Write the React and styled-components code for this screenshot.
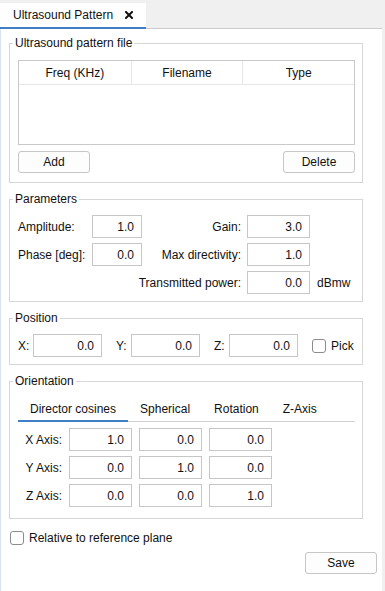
import React from "react";
import styled, { createGlobalStyle } from "styled-components";

const GlobalStyle = createGlobalStyle`
  html, body { margin: 0; padding: 0; background: #f0f0f0; }
  body { font-family: "Liberation Sans", Arial, sans-serif; font-size: 12px; color: #111; }
  * { box-sizing: border-box; }
`;

const Page = styled.div`
  width: 385px;
  height: 591px;
  display: flex;
  background: #f0f0f0;
  overflow: hidden;
`;

const Main = styled.div`
  width: 382px;
  display: flex;
  flex-direction: column;
`;

const TabBar = styled.div`
  height: 29px;
  display: flex;
  align-items: flex-end;
  border-bottom: 1px solid #cbcbcb;
  background: #f0f0f0;
`;

const DocTab = styled.div`
  width: 146px;
  height: 26px;
  margin-bottom: -1px;
  padding-left: 13px;
  background: #fff;
  border-bottom: 2px solid #3f7fc6;
  display: flex;
  align-items: center;
  gap: 12px;
  font-size: 12px;
  color: #111;
`;

const Content = styled.div`
  flex: 1;
  background: #fff;
  border-left: 1px solid #d9e4f1;
  padding: 7px 5px 0 8px;
  display: flex;
  flex-direction: column;
`;

const Group = styled.fieldset`
  width: 354px;
  margin: 0;
  min-width: 0;
  border: 1px solid #d6d6d6;
  padding: ${(p) => p.$pad};
  & + & { margin-top: 9px; }
`;

const Legend = styled.legend`
  margin-left: -5px;
  padding: 0 2px;
  line-height: 14px;
  font-size: 12px;
  color: #111;
`;

const Table = styled.div`
  height: 85px;
  border: 1px solid #c9c9c9;
  display: flex;
  flex-direction: column;
`;

const HeaderRow = styled.div`
  height: 24px;
  display: grid;
  grid-template-columns: 1fr 1fr 1fr;
  border-bottom: 1px solid #e6e6e6;
`;

const HeaderCell = styled.div`
  display: flex;
  align-items: center;
  justify-content: center;
  border-left: ${(p) => (p.$first ? "none" : "1px solid #e6e6e6")};
`;

const ButtonRow = styled.div`
  display: flex;
  justify-content: space-between;
  margin-top: 6px;
`;

const Button = styled.button`
  width: 72px;
  height: 22px;
  padding: 0;
  background: #fdfdfd;
  border: 1px solid #c6c6c6;
  border-radius: 3px;
  font-family: inherit;
  font-size: 12px;
  color: #111;
`;

const ParamGrid = styled.div`
  display: grid;
  grid-template-columns: 68px 50px 93px 63px auto;
  column-gap: 6px;
  row-gap: 5px;
  align-items: center;
`;

const Label = styled.span`
  white-space: nowrap;
  text-align: ${(p) => (p.$right ? "right" : "left")};
  grid-column: ${(p) => p.$span || "auto"};
  margin-left: ${(p) => p.$ml || 0}px;
`;

const Field = styled.input`
  width: 100%;
  height: 23px;
  border: 1px solid #c6c6c6;
  padding: 0 7px 0 4px;
  text-align: right;
  font-family: inherit;
  font-size: 12px;
  color: #111;
  background: #fff;
  outline: none;
  grid-column: ${(p) => p.$col || "auto"};
`;

const PosRow = styled.div`
  display: flex;
  align-items: center;
`;

const PosField = styled.div`
  width: 84px;
  display: flex;
  align-items: center;
  margin-right: 14px;
  & > span { width: 15px; flex: none; }
`;

const CheckLine = styled.label`
  display: flex;
  align-items: center;
  gap: 5px;
  margin-left: ${(p) => p.$ml || 0}px;
  margin-top: ${(p) => p.$mt || 0}px;
`;

const Box = styled.span`
  width: 14px;
  height: 14px;
  border: 1px solid #8c8c8c;
  border-radius: 3px;
  background: #fff;
  flex: none;
`;

const TabStrip = styled.div`
  height: 25px;
  display: flex;
  border-bottom: 1px solid #cfcfcf;
`;

const OTab = styled.div`
  padding: 0 12px;
  margin-bottom: -1px;
  display: flex;
  align-items: center;
  border-bottom: 2px solid ${(p) => (p.$active ? "#3f7fc6" : "transparent")};
`;

const AxisGrid = styled.div`
  margin-top: 6px;
  display: grid;
  grid-template-columns: 44px 63px 63px 63px;
  column-gap: 7px;
  row-gap: 5px;
  align-items: center;
`;

const SaveRow = styled.div`
  display: flex;
  justify-content: flex-end;
  margin-top: 7px;
`;

const CloseIcon = () => (
  <svg width="8" height="8" viewBox="0 0 8 8">
    <path d="M1 1 L7 7 M7 1 L1 7" stroke="#111" strokeWidth="2" strokeLinecap="square" />
  </svg>
);

const axes = [
  ["X Axis:", "1.0", "0.0", "0.0"],
  ["Y Axis:", "0.0", "1.0", "0.0"],
  ["Z Axis:", "0.0", "0.0", "1.0"],
];

export default function App() {
  return (
    <>
      <GlobalStyle />
      <Page>
        <Main>
          <TabBar>
            <DocTab>
              <span>Ultrasound Pattern</span>
              <CloseIcon />
            </DocTab>
          </TabBar>
          <Content>
            <Group $pad="10px 7px 9px 8px">
              <Legend>Ultrasound pattern file</Legend>
              <Table>
                <HeaderRow>
                  <HeaderCell $first>Freq (KHz)</HeaderCell>
                  <HeaderCell>Filename</HeaderCell>
                  <HeaderCell>Type</HeaderCell>
                </HeaderRow>
              </Table>
              <ButtonRow>
                <Button>Add</Button>
                <Button>Delete</Button>
              </ButtonRow>
            </Group>

            <Group $pad="9px 7px 7px 8px">
              <Legend>Parameters</Legend>
              <ParamGrid>
                <Label>Amplitude:</Label>
                <Field readOnly value="1.0" />
                <Label $right>Gain:</Label>
                <Field readOnly value="3.0" />
                <span />
                <Label>Phase [deg]:</Label>
                <Field readOnly value="0.0" />
                <Label $right>Max directivity:</Label>
                <Field readOnly value="1.0" />
                <span />
                <Label $right $span="1 / 4">Transmitted power:</Label>
                <Field readOnly value="0.0" />
                <Label $ml={1}>dBmw</Label>
              </ParamGrid>
            </Group>

            <Group $pad="9px 7px 7px 8px">
              <Legend>Position</Legend>
              <PosRow>
                <PosField>
                  <span>X:</span>
                  <Field readOnly value="0.0" />
                </PosField>
                <PosField>
                  <span>Y:</span>
                  <Field readOnly value="0.0" />
                </PosField>
                <PosField>
                  <span>Z:</span>
                  <Field readOnly value="0.0" />
                </PosField>
                <CheckLine>
                  <Box />
                  <span>Pick</span>
                </CheckLine>
              </PosRow>
            </Group>

            <Group $pad="9px 7px 11px 8px">
              <Legend>Orientation</Legend>
              <TabStrip>
                <OTab $active>Director cosines</OTab>
                <OTab>Spherical</OTab>
                <OTab>Rotation</OTab>
                <OTab>Z-Axis</OTab>
              </TabStrip>
              <AxisGrid>
                {axes.map((row) => (
                  <React.Fragment key={row[0]}>
                    <Label $right>{row[0]}</Label>
                    <Field readOnly value={row[1]} />
                    <Field readOnly value={row[2]} />
                    <Field readOnly value={row[3]} />
                  </React.Fragment>
                ))}
              </AxisGrid>
            </Group>

            <CheckLine $ml={1} $mt={12}>
              <Box />
              <span>Relative to reference plane</span>
            </CheckLine>

            <SaveRow>
              <Button>Save</Button>
            </SaveRow>
          </Content>
        </Main>
      </Page>
    </>
  );
}
